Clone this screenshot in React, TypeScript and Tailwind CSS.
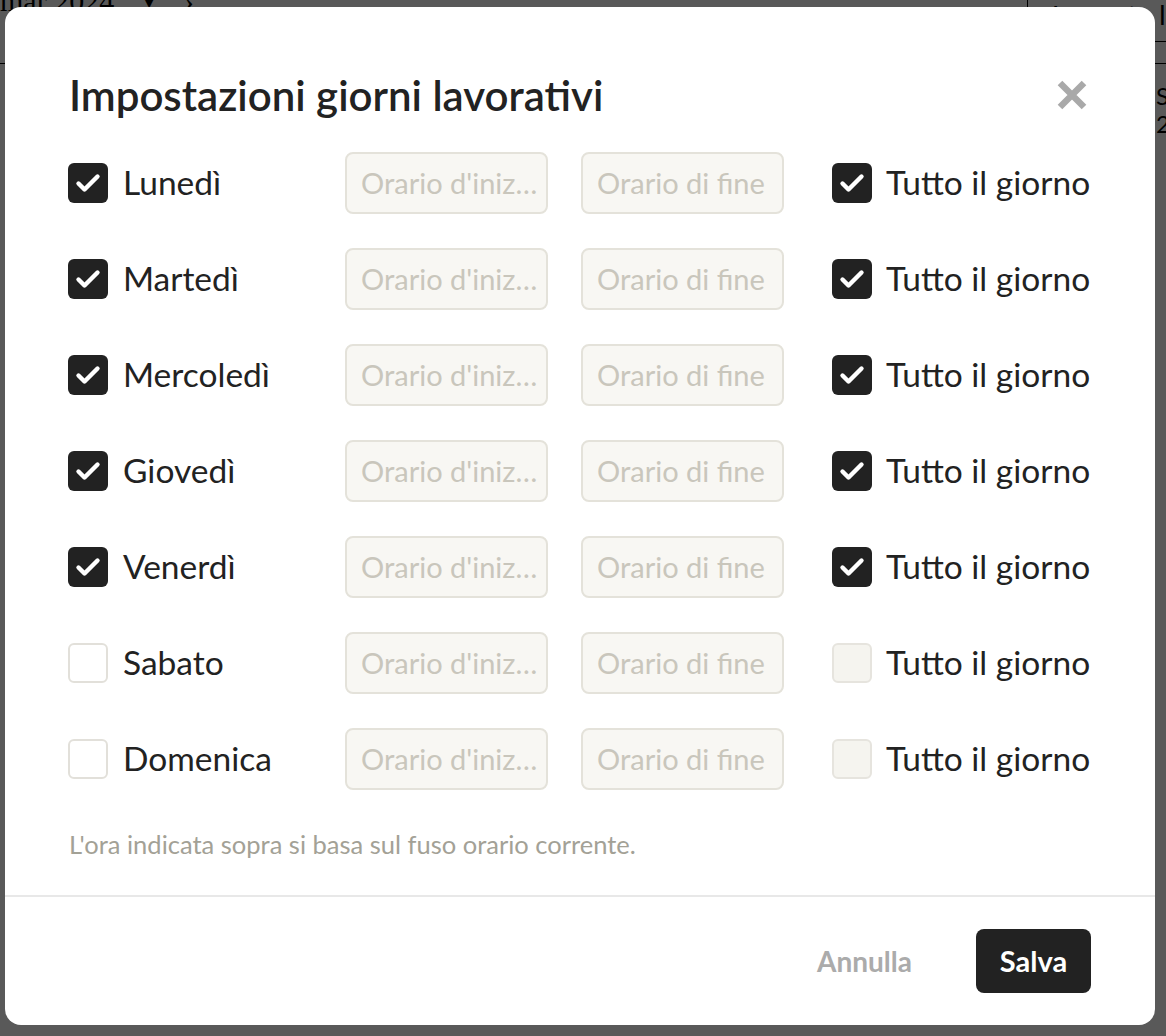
import React from 'react';

const days = [
  { name: 'Lunedì', on: true },
  { name: 'Martedì', on: true },
  { name: 'Mercoledì', on: true },
  { name: 'Giovedì', on: true },
  { name: 'Venerdì', on: true },
  { name: 'Sabato', on: false },
  { name: 'Domenica', on: false },
];

function Check({ checked, muted }: { checked: boolean; muted?: boolean }) {
  if (checked) {
    return (
      <span className="flex h-10 w-10 shrink-0 items-center justify-center rounded-[6px] bg-[#222222]">
        <svg width="30" height="30" viewBox="0 0 30 30" fill="none">
          <path d="M5.5 15.5l6 6L24.5 8.5" stroke="#fff" strokeWidth="4.4" strokeLinecap="round" strokeLinejoin="round" />
        </svg>
      </span>
    );
  }
  return (
    <span
      className={
        muted
          ? 'h-10 w-10 shrink-0 rounded-[6px] border-2 border-[#e6e4de] bg-[#f5f4ef]'
          : 'h-10 w-10 shrink-0 rounded-[6px] border-2 border-[#e2e0da] bg-white'
      }
    />
  );
}

function TimeInput({ placeholder }: { placeholder: string }) {
  return (
    <div className="flex h-[62px] w-[203px] items-center overflow-hidden rounded-[8px] border-2 border-[#e4e2da] bg-[#f8f7f3] pl-[14px] pr-[2px]">
      <span className="truncate text-[29px] text-[#c9c6bc]">{placeholder}</span>
    </div>
  );
}

export default function App() {
  return (
    <div className="relative h-[1036px] w-[1166px] overflow-hidden bg-white font-['Lato',sans-serif]">
      {/* page behind the dialog */}
      <div className="flex h-[64px] items-start justify-between border-b border-black">
        <div className="flex items-center gap-6 text-[30px] leading-[14px] text-black font-['Liberation_Serif',serif]">
          <span className="-mt-[6px]">mar 2024</span>
          <span className="-mt-[6px] text-[22px]">▼</span>
          <span className="-mt-[6px]">›</span>
        </div>
        <div className="-mt-[10px] mr-[-40px] border border-black px-6 py-1 text-[28px] text-black font-['Liberation_Sans',sans-serif]">
          Imposta la
        </div>
      </div>
      <div className="flex justify-end pt-[20px] text-[24px] leading-[24px] text-black">
        <div className="flex w-[10px] flex-col gap-[4px]">
          <span>S</span>
          <span>2</span>
        </div>
      </div>

      {/* overlay */}
      <div className="absolute inset-0 bg-black/65">
        <div className="ml-[5px] mt-[7px] flex h-[1018px] w-[1150px] flex-col rounded-[16px] bg-white text-[#222222]">
          <div className="px-16 pt-[66px]">
            <div className="flex h-[44px] items-center justify-between">
              <h2 className="text-[42px] font-semibold leading-[44px]">Impostazioni giorni lavorativi</h2>
              <svg width="34" height="34" viewBox="0 0 34 34" className="mr-[2px]">
                <path d="M5 5L29 29M29 5L5 29" stroke="#a9a9a9" strokeWidth="6.5" />
              </svg>
            </div>

            <div className="mt-[35px] flex flex-col gap-[34px]">
              {days.map((d) => (
                <div key={d.name} className="flex h-[62px] items-center">
                  <div className="-ml-px flex w-[277px] items-center gap-[15px]">
                    <Check checked={d.on} />
                    <span className="-mt-[2px] text-[33.5px]">{d.name}</span>
                  </div>
                  <TimeInput placeholder="Orario d'iniz…" />
                  <div className="ml-[33px]">
                    <TimeInput placeholder="Orario di fine" />
                  </div>
                  <div className="ml-[48px] flex items-center gap-[14px]">
                    <Check checked={d.on} muted />
                    <span className="-mt-[2px] text-[33.5px]">Tutto il giorno</span>
                  </div>
                </div>
              ))}
            </div>

            <p className="mt-[39px] text-[25.5px] leading-[30px] text-[#a3a196]">
              L'ora indicata sopra si basa sul fuso orario corrente.
            </p>
          </div>

          <div className="mt-[36px] border-t-2 border-[#e8e8e8]" />

          <div className="flex items-center justify-end gap-[64px] px-16 pt-[32px]">
            <button className="text-[28px] font-bold text-[#ababab]">Annulla</button>
            <button className="h-16 w-[115px] rounded-[8px] bg-[#222222] text-[29px] font-bold text-white">Salva</button>
          </div>
        </div>
      </div>
    </div>
  );
}
